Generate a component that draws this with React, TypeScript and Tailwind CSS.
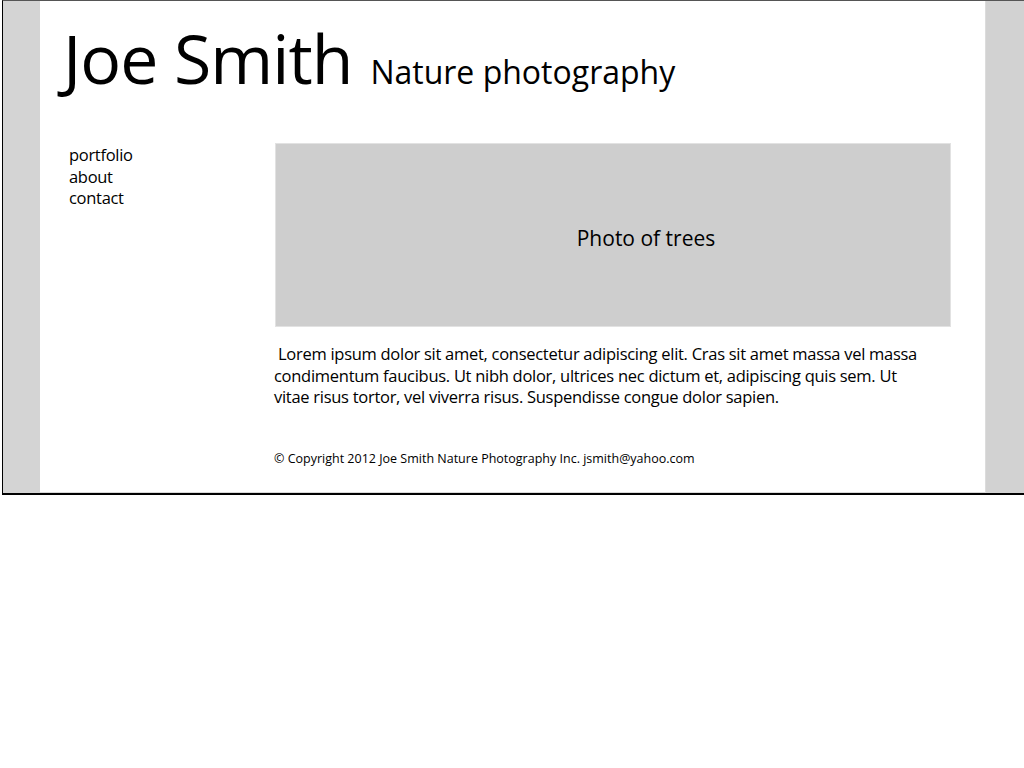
export default function App() {
  const font = { fontFamily: '"Open Sans", "Noto Sans", sans-serif' };
  return (
    <div className="w-[1024px] h-[768px] bg-white" style={font}>
      <div className="ml-[2px] h-[495px] border-l border-t border-b-2 border-l-black border-t-[#555] border-b-black flex">
        {/* left band */}
        <div className="w-[37px] bg-[#d4d4d4]" />

        {/* main content */}
        <div className="flex-1 flex flex-col border-b border-[#d8d8d8]">
          <header className="flex items-baseline pl-[23px] pt-[17px] h-[116px]">
            <h1 className="text-[68px] leading-[80px] text-black tracking-[-1px]">Joe Smith</h1>
            <span className="ml-[18px] text-[32px] text-black tracking-[0px]">Nature photography</span>
          </header>

          <div className="flex mt-[26px]">
            <nav className="ml-[29px] w-[206px] pt-[1px] flex flex-col text-[16.5px] leading-[21.5px] text-black tracking-[-0.3px]">
              <a href="#">portfolio</a>
              <a href="#">about</a>
              <a href="#">contact</a>
            </nav>

            <div className="w-[676px] flex flex-col">
              <div className="h-[184px] bg-[#cecece] border border-[#e2e2e2] flex items-center justify-center">
                <span className="text-[21px] text-black tracking-[0px] ml-[66px] mt-[7px]">Photo of trees</span>
              </div>
              <p className="mt-[16px] text-[16.5px] leading-[21.5px] text-black tracking-[-0.28px] w-[660px] -ml-[1px]">
                &nbsp;Lorem ipsum dolor sit amet, consectetur adipiscing elit. Cras sit amet massa vel massa condimentum faucibus. Ut nibh dolor, ultrices nec dictum et, adipiscing quis sem. Ut vitae risus tortor, vel viverra risus. Suspendisse congue dolor sapien.
              </p>
              <p className="mt-[42px] -ml-[1px] text-[12.5px] text-black tracking-[0px]">
                © Copyright 2012 Joe Smith Nature Photography Inc. jsmith@yahoo.com
              </p>
            </div>
          </div>
        </div>

        {/* right band */}
        <div className="w-[39px] bg-[#d2d2d2] border-l border-[#dcdcdc]" />
      </div>
    </div>
  );
}
